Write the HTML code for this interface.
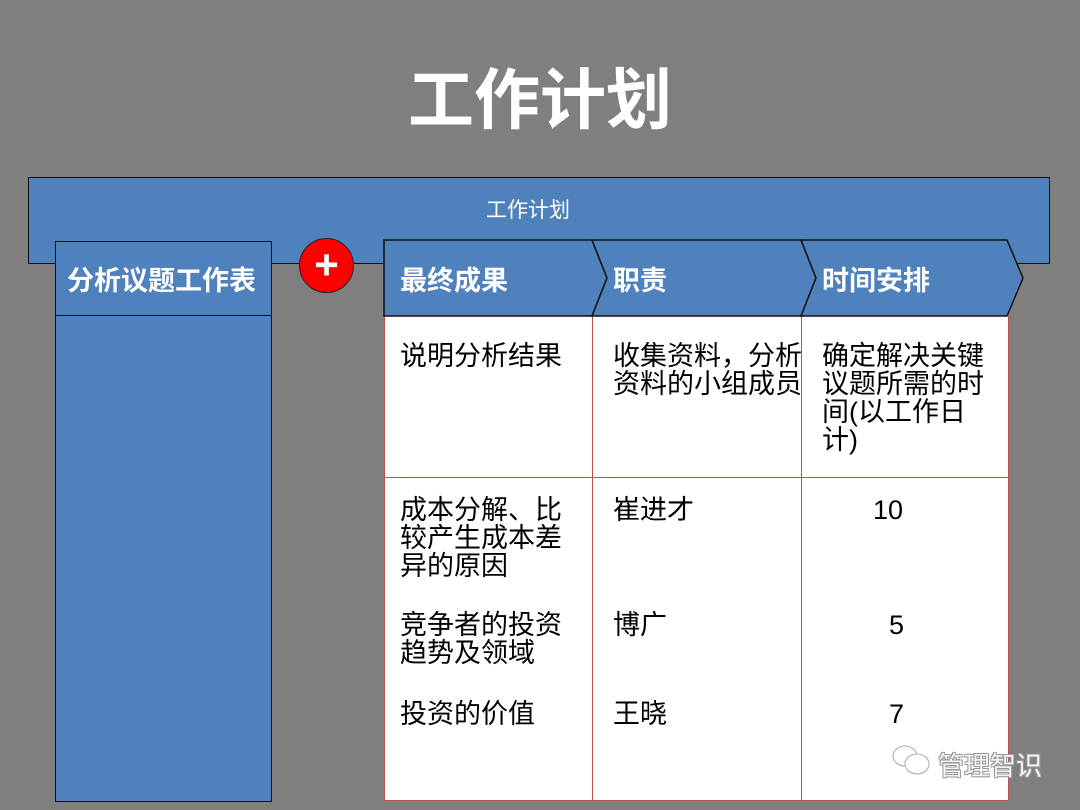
<!DOCTYPE html>
<html><head><meta charset="utf-8"><style>
body{margin:0;width:1080px;height:810px;background:#7f7f7f;position:relative;overflow:hidden;font-family:"Liberation Sans","Noto Sans CJK SC",sans-serif}
.a{position:absolute}
.t{color:#000;font-size:27px;line-height:28px;white-space:nowrap}
</style></head><body>
<div class="a" style="left:0;top:60px;width:1080px;text-align:center;color:#fff;font-size:66px;font-weight:bold;line-height:80px">工作计划</div>
<div class="a" style="left:28px;top:177px;width:1020px;height:85px;background:#4f81bd;border:1px solid #111"></div>
<div class="a" style="left:486px;top:194px;color:#fff;font-size:21px">工作计划</div>
<div class="a" style="left:55px;top:241px;width:215px;height:559px;background:#4f81bd;border:1px solid #111"></div>
<div class="a" style="left:55px;top:315px;width:216px;height:1px;background:#111"></div>
<div class="a" style="left:67px;top:259px;color:#fff;font-size:27px;font-weight:bold">分析议题工作表</div>
<div class="a" style="left:299px;top:238px;width:53px;height:53px;border-radius:50%;background:#f00;border:1px solid #222;color:#fff;font-size:42px;font-weight:bold;text-align:center;line-height:52px">+</div>
<div class="a" style="left:384px;top:316px;width:623px;height:484px;background:#fff;border:1px solid #c0504d;border-top:none"></div>
<div class="a" style="left:592px;top:316px;width:1px;height:485px;background:#c0504d"></div>
<div class="a" style="left:801px;top:316px;width:1px;height:485px;background:#c0504d"></div>
<div class="a" style="left:384px;top:477px;width:624px;height:1px;background:#c0504d"></div>
<svg class="a" style="left:0;top:0" width="1080" height="810">
<path d="M384,240 H592 L607,278 L592,316 H384 Z" fill="#4f81bd" stroke="#111" stroke-width="1.5"/>
<path d="M592,240 H801 L816,278 L801,316 H592 L607,278 Z" fill="#4f81bd" stroke="#111" stroke-width="1.5"/>
<path d="M801,240 H1007 L1023,278 L1007,316 H801 L816,278 Z" fill="#4f81bd" stroke="#111" stroke-width="1.5"/>
</svg>
<div class="a" style="left:400px;top:259px;color:#fff;font-size:27px;font-weight:bold">最终成果</div>
<div class="a" style="left:613px;top:259px;color:#fff;font-size:27px;font-weight:bold">职责</div>
<div class="a" style="left:822px;top:259px;color:#fff;font-size:27px;font-weight:bold">时间安排</div>
<div class="a t" style="left:400px;top:342px">说明分析结果</div>
<div class="a t" style="left:613px;top:342px;width:188px;overflow:hidden">收集资料，分析<br>资料的小组成员</div>
<div class="a t" style="left:822px;top:342px">确定解决关键<br>议题所需的时<br>间(以工作日<br>计)</div>
<div class="a t" style="left:400px;top:496px">成本分解、比<br>较产生成本差<br>异的原因</div>
<div class="a t" style="left:613px;top:496px">崔进才</div>
<div class="a t" style="left:873px;top:496px">10</div>
<div class="a t" style="left:400px;top:611px">竞争者的投资<br>趋势及领域</div>
<div class="a t" style="left:613px;top:611px">博广</div>
<div class="a t" style="left:889px;top:611px">5</div>
<div class="a t" style="left:400px;top:700px">投资的价值</div>
<div class="a t" style="left:613px;top:700px">王晓</div>
<div class="a t" style="left:889px;top:700px">7</div>
<svg class="a" style="left:890px;top:743px" width="45" height="36"><ellipse cx="15" cy="13" rx="12" ry="10" fill="#fff" stroke="#aaa"/><ellipse cx="27" cy="21" rx="12" ry="10" fill="#fff" stroke="#aaa"/></svg>
<div class="a" style="left:938px;top:746px;color:#f4f4f4;font-size:26px;text-shadow:1px 1px 0 #999,-1px -1px 0 #999,1px -1px 0 #999,-1px 1px 0 #999">管理智识</div>
</body></html>
